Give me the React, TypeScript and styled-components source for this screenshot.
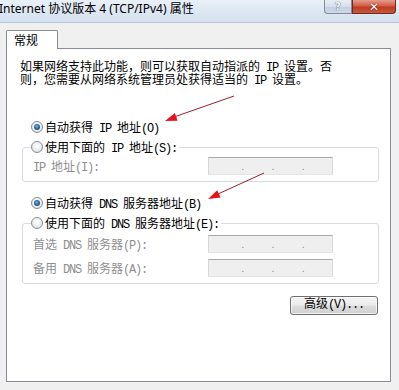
import React from "react";
import styled, { createGlobalStyle } from "styled-components";

const Global = createGlobalStyle`
  html, body { margin: 0; padding: 0; background: #f0f0f0; }
  body {
    font-family: "Liberation Mono", "Noto Sans CJK SC", monospace;
    font-size: 12px;
    color: #000;
  }
  * { box-sizing: border-box; }
`;

const Window = styled.div`
  position: relative;
  width: 399px;
  height: 390px;
  display: flex;
  flex-direction: column;
  background: #f0f0f0;
  overflow: hidden;
`;

const TitleBar = styled.div`
  flex: none;
  height: 23px;
  display: flex;
  align-items: flex-start;
  background: linear-gradient(to bottom, #e9f0f8 0%, #dde7f3 55%, #d3e0ee 100%);
  border-bottom: 1px solid #b3c3d5;
`;

const Title = styled.div`
  flex: 1;
  margin-left: -1px;
  padding-top: 1px;
  font-family: "Noto Sans", "Noto Sans CJK SC", sans-serif;
  font-size: 12px;
  line-height: 16px;
  white-space: nowrap;
  color: #000;
`;

const CaptionButtons = styled.div`
  display: flex;
  margin-right: 3px;
`;

const CaptionButton = styled.div<{ $kind: "help" | "close" }>`
  width: ${(p) => (p.$kind === "close" ? 44 : 28)}px;
  height: 14px;
  display: flex;
  align-items: center;
  justify-content: center;
  border: 1px solid ${(p) => (p.$kind === "close" ? "#6b2a22" : "#7e8da2")};
  border-top: none;
  border-radius: ${(p) => (p.$kind === "close" ? "0 0 4px 0" : "0 0 0 4px")};
  background: ${(p) =>
    p.$kind === "close"
      ? "linear-gradient(to bottom, #e59c8c 0%, #d25c45 45%, #c03a22 55%, #c85a3c 100%)"
      : "linear-gradient(to bottom, #e8eef6 0%, #d4dfeb 50%, #c2cfdf 55%, #cdd9e8 100%)"};
  color: ${(p) => (p.$kind === "close" ? "#fff" : "#f4f7fb")};
  font-family: "DejaVu Sans", sans-serif;
  font-size: ${(p) => (p.$kind === "close" ? 12 : 10)}px;
  font-weight: bold;
  line-height: 1;
  text-shadow: ${(p) =>
    p.$kind === "close"
      ? "0 0 1px #5a1a10, 0 0 1px #5a1a10"
      : "0 0 1px #5c6b80, 0 0 1px #5c6b80"};
`;

const Body = styled.div`
  flex: 1;
  display: flex;
  flex-direction: column;
  padding: 7px 8px 8px 6px;
`;

const TabStrip = styled.div`
  position: relative;
  z-index: 1;
  display: flex;
  height: 19px;
  margin-bottom: -1px;
`;

const Tab = styled.div`
  width: 52px;
  height: 19px;
  padding: 2px 0 0 7px;
  background: #fff;
  border: 1px solid #898c95;
  border-bottom: none;
  border-radius: 2px 2px 0 0;
  font-family: "Noto Sans CJK SC", sans-serif;
  font-size: 12px;
  line-height: 14px;
`;

const Panel = styled.div`
  flex: 1;
  display: flex;
  flex-direction: column;
  background: #fff;
  border: 1px solid #898c95;
  padding: 13px 11px 0 13px;
`;

const Para = styled.div`
  font-size: 12px;
  line-height: 13px;
`;

const ParaLine = styled.div`
  white-space: nowrap;
`;

const Latin = styled.span`
  letter-spacing: -1.2px;
`;

const RadioRow = styled.div<{ $top?: number }>`
  display: flex;
  align-items: center;
  height: 20px;
  margin-top: ${(p) => p.$top ?? 0}px;
  margin-left: ${(p) => (p.$top !== undefined ? 11 : 0)}px;
`;

const RadioLabel = styled.span`
  white-space: pre;
`;

const Radio = styled.span<{ $checked?: boolean }>`
  flex: none;
  position: relative;
  width: 12px;
  height: 12px;
  margin-right: 2px;
  border-radius: 50%;
  border: 1px solid #8a8d92;
  background: radial-gradient(circle at 50% 40%, #ffffff 0%, #f0f0f0 45%, #d4d6d9 100%);

  &::after {
    content: "";
    display: ${(p) => (p.$checked ? "block" : "none")};
    position: absolute;
    left: 2px;
    top: 2px;
    width: 6px;
    height: 6px;
    border-radius: 50%;
    background: radial-gradient(circle at 45% 40%, #7fb3ea 0%, #2f68a8 45%, #14355e 100%);
  }
`;

const Group = styled.fieldset<{ $pad: number }>`
  margin: 0 0 0 2px;
  padding: 0 0 ${(p) => p.$pad}px 8px;
  border: 1px solid #d5dde3;
  border-radius: 3px;
  min-inline-size: 0;

  & > legend {
    padding: 0 2px 0 0;
  }
`;

const FieldRow = styled.div<{ $top: number }>`
  display: grid;
  grid-template-columns: 175px 125px;
  align-items: center;
  height: 18px;
  margin: ${(p) => p.$top}px 0 0 2px;
  color: #8f8f8f;
  white-space: pre;
`;

const IpBox = styled.div`
  display: flex;
  align-items: flex-end;
  height: 18px;
  padding: 0 0 3px 5px;
  background: #efefef;
  border: 1px solid;
  border-color: #a9a9a9 #d9d9d9 #e4e4e4 #d6d6d6;
  border-radius: 1px;
`;

const Seg = styled.span`
  flex: 1;
`;

const Dot = styled.span`
  flex: none;
  width: 3px;
  font-family: "Liberation Sans", sans-serif;
  font-size: 11px;
  line-height: 9px;
  color: #8c8c8c;
`;

const ButtonRow = styled.div`
  display: flex;
  justify-content: flex-end;
  margin: 12px 1px 0 0;
`;

const Button = styled.div`
  width: 88px;
  height: 19px;
  padding-left: 13px;
  border: 1px solid #707070;
  border-radius: 3px;
  background: linear-gradient(to bottom, #f4f4f4 0%, #ebebeb 48%, #dddddd 52%, #cfcfcf 100%);
  box-shadow: inset 0 0 0 1px rgba(255, 255, 255, 0.7);
  font-size: 12px;
  line-height: 16px;
  white-space: nowrap;
`;

const Annotations = styled.svg`
  position: absolute;
  left: 0;
  top: 0;
  pointer-events: none;
`;

function T({ s }: { s: string }) {
  const parts = s.split(/([\x20-\x7e]+)/).filter((p) => p.length > 0);
  return (
    <>
      {parts.map((p, i) =>
        /^[\x20-\x7e]+$/.test(p) ? <Latin key={i}>{p}</Latin> : <React.Fragment key={i}>{p}</React.Fragment>
      )}
    </>
  );
}

function IpField() {
  return (
    <IpBox>
      <Seg />
      <Dot>.</Dot>
      <Seg />
      <Dot>.</Dot>
      <Seg />
      <Dot>.</Dot>
      <Seg />
    </IpBox>
  );
}

function RadioOption({ checked, label, top }: { checked?: boolean; label: string; top?: number }) {
  return (
    <RadioRow $top={top}>
      <Radio $checked={checked} />
      <RadioLabel>
        <T s={label} />
      </RadioLabel>
    </RadioRow>
  );
}

export default function App() {
  return (
    <>
      <Global />
      <Window>
        <TitleBar>
          <Title>Internet 协议版本 4 (TCP/IPv4) 属性</Title>
          <CaptionButtons>
            <CaptionButton $kind="help">?</CaptionButton>
            <CaptionButton $kind="close">✕</CaptionButton>
          </CaptionButtons>
        </TitleBar>
        <Body>
          <TabStrip>
            <Tab>常规</Tab>
          </TabStrip>
          <Panel>
            <Para>
              <ParaLine><T s="如果网络支持此功能，则可以获取自动指派的 IP 设置。否" /></ParaLine>
              <ParaLine><T s="则，您需要从网络系统管理员处获得适当的 IP 设置。" /></ParaLine>
            </Para>

            <RadioOption checked top={29} label="自动获得 IP 地址(O)" />
            <Group $pad={6}>
              <legend>
                <RadioOption label="使用下面的 IP 地址(S):" />
              </legend>
              <FieldRow $top={0}>
                <span><T s="IP 地址(I):" /></span>
                <IpField />
              </FieldRow>
            </Group>

            <RadioOption checked top={11} label="自动获得 DNS 服务器地址(B)" />
            <Group $pad={6}>
              <legend>
                <RadioOption label="使用下面的 DNS 服务器地址(E):" />
              </legend>
              <FieldRow $top={2}>
                <span><T s="首选 DNS 服务器(P):" /></span>
                <IpField />
              </FieldRow>
              <FieldRow $top={6}>
                <span><T s="备用 DNS 服务器(A):" /></span>
                <IpField />
              </FieldRow>
            </Group>

            <ButtonRow>
              <Button><T s="高级(V)..." /></Button>
            </ButtonRow>
          </Panel>
        </Body>

        <Annotations width="399" height="390" viewBox="0 0 399 390">
          <line x1="234" y1="96" x2="174" y2="117" stroke="#9a2030" strokeWidth="1" />
          <polygon points="165,121 177.6,120.7 174.9,113.1" fill="#e3141b" />
          <line x1="264" y1="173" x2="218" y2="194" stroke="#9a2030" strokeWidth="1" />
          <polygon points="208,199 220.6,197.5 217.2,190.3" fill="#e3141b" />
        </Annotations>
      </Window>
    </>
  );
}
